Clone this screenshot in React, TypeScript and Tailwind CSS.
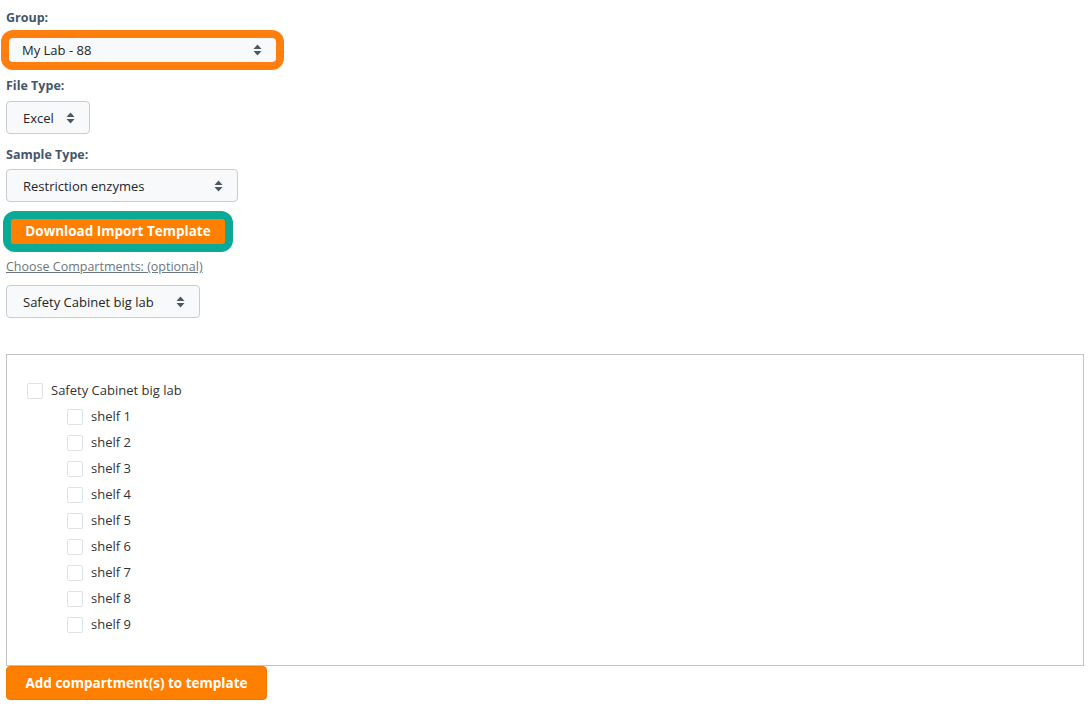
import React from "react";

const Arrows = () => (
  <svg width="9" height="12" viewBox="0 0 9 12" className="shrink-0">
    <path d="M4.5 0.5 L8.5 5 L0.5 5 Z" fill="#4a5866" />
    <path d="M4.5 11.5 L8.5 7 L0.5 7 Z" fill="#4a5866" />
  </svg>
);

const Select = ({ text, w, h = 33, pl = 16, border = true }: { text: string; w: number; h?: number; pl?: number; border?: boolean }) => (
  <div
    className={`flex items-center justify-between bg-[#f8f9fa] rounded-[4px] pr-[14px] text-[13px] text-[#212529] ${border ? "border border-[#c8cdd2]" : ""}`}
    style={{ width: w, height: h, paddingLeft: pl }}
  >
    <span className="pt-[2px]">{text}</span>
    <Arrows />
  </div>
);

const Check = () => <div className="w-[16px] h-[16px] border border-[#dfe2e6] rounded-[2px] bg-white shrink-0" />;

export default function App() {
  const shelves = [1, 2, 3, 4, 5, 6, 7, 8, 9];
  return (
    <div className="w-[1091px] h-[713px] bg-white text-[#212529]" style={{ fontFamily: '"Open Sans", "Noto Sans", sans-serif' }}>
      <div className="pl-[6px] pt-[9px] flex flex-col items-start">
        <div className="text-[12.5px] font-bold text-[#44566a] leading-[18px]">Group:</div>
        <div className="ml-[-5px] mt-[3px] bg-[#ff7f0e] rounded-[12px] p-[8px] w-[283px] h-[40px]">
          <Select text="My Lab - 88" w={267} h={24} pl={13} border={false} />
        </div>
        <div className="mt-[7px] text-[12.5px] font-bold text-[#44566a] leading-[18px]">File Type:</div>
        <div className="mt-[6px]">
          <Select text="Excel" w={84} />
        </div>
        <div className="mt-[12px] text-[12.5px] font-bold text-[#44566a] leading-[18px]">Sample Type:</div>
        <div className="mt-[5px]">
          <Select text="Restriction enzymes" w={232} />
        </div>
        <div className="ml-[-3px] mt-[9px] bg-[#0aaa97] rounded-[12px] p-[8px] w-[230px] h-[41px]">
          <div className="w-full h-[25px] bg-[#ff8000] rounded-[3px] flex items-center justify-center text-white font-bold text-[13.5px]">
            Download Import Template
          </div>
        </div>
        <div className="mt-[6px] text-[12.5px] leading-[18px] text-[#6c757d] underline">Choose Compartments: (optional)</div>
        <div className="mt-[9px]">
          <Select text="Safety Cabinet big lab" w={194} />
        </div>
        <div className="mt-[36px] w-[1078px] h-[312px] border border-[#c4c4c4] pt-[23px] pl-[20px]">
          <div className="flex items-center gap-[8px] h-[26px] text-[13px] text-[#333]">
            <Check />
            <span>Safety Cabinet big lab</span>
          </div>
          {shelves.map((n) => (
            <div key={n} className="flex items-center gap-[8px] h-[26px] pl-[40px] text-[13px] text-[#333]">
              <Check />
              <span>shelf {n}</span>
            </div>
          ))}
        </div>
        <div className="w-[261px] h-[34px] bg-[#ff8000] border border-[#f07800] rounded-[4px] flex items-center justify-center text-white font-bold text-[13.5px]">
          Add compartment(s) to template
        </div>
      </div>
    </div>
  );
}
